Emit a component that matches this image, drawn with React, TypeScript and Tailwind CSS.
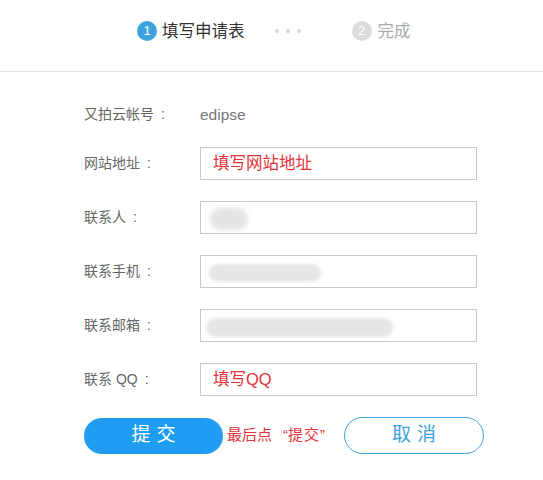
import React from "react";

const font = { fontFamily: '"Liberation Sans", "Noto Sans CJK SC", sans-serif' };

function Row({ label, children }: { label: string; children: React.ReactNode }) {
  return (
    <div className="flex items-center h-[33px]">
      <div className="w-[116px] text-[14px] text-[#666] flex items-center">
        <span>{label}</span>
        <span className="ml-[7px]">:</span>
      </div>
      {children}
    </div>
  );
}

function Box({ children }: { children?: React.ReactNode }) {
  return (
    <div className="relative w-[277px] h-[33px] border border-[#c8c8c8] flex items-center pl-[12px] overflow-hidden">
      {children}
    </div>
  );
}

export default function App() {
  return (
    <div className="w-[543px] h-[480px] bg-white" style={font}>
      <div className="h-[72px] border-b border-[#e3e3e3] flex justify-start pl-[137px] pt-[21px]">
        <div className="flex items-start h-[20px]">
          <div className="flex items-center">
            <div className="w-[20px] h-[20px] rounded-full bg-[#3ea2dd] text-white text-[13px] flex items-center justify-center">1</div>
            <div className="ml-[5px] text-[16.5px] text-[#333] leading-[20px]">填写申请表</div>
          </div>
          <div className="flex items-center gap-[7px] h-[20px] ml-[30px] mr-[51px]">
            <span className="w-[4px] h-[4px] rounded-full bg-[#d6d6d6]" />
            <span className="w-[4px] h-[4px] rounded-full bg-[#d6d6d6]" />
            <span className="w-[4px] h-[4px] rounded-full bg-[#d6d6d6]" />
          </div>
          <div className="flex items-center">
            <div className="w-[20px] h-[20px] rounded-full bg-[#dcdcdc] text-white text-[13px] flex items-center justify-center">2</div>
            <div className="ml-[6px] text-[16.5px] text-[#aaa] leading-[20px]">完成</div>
          </div>
        </div>
      </div>

      <div className="pl-[84px] pt-[26px] flex flex-col">
        <Row label="又拍云帐号">
          <div className="text-[15.5px] text-[#777]">edipse</div>
        </Row>
        <div className="mt-[16px] flex flex-col gap-[21px]">
          <Row label="网站地址">
            <Box>
              <span className="text-[16.5px] text-[#e2333b]">填写网站地址</span>
            </Box>
          </Row>
          <Row label="联系人">
            <Box>
              <div className="absolute left-[9px] top-[6px] w-[38px] h-[22px] rounded-full bg-[#e4e4e4] blur-[2px]" />
            </Box>
          </Row>
          <Row label="联系手机">
            <Box>
              <div className="absolute left-[8px] top-[8px] w-[112px] h-[18px] rounded-full bg-[#e6e6e6] blur-[1.5px]" />
            </Box>
          </Row>
          <Row label="联系邮箱">
            <Box>
              <div className="absolute left-[5px] top-[8px] w-[187px] h-[19px] rounded-full bg-[#e6e6e6] blur-[1.5px]" />
            </Box>
          </Row>
          <Row label="联系 QQ">
            <Box>
              <span className="text-[16.5px] text-[#e2333b]">填写QQ</span>
            </Box>
          </Row>
        </div>
        <div className="mt-[21px] flex items-center">
          <div className="w-[139px] h-[36px] rounded-full bg-[#1e9df2] text-white text-[19px] tracking-[6px] flex items-center justify-center pl-[6px]">提交</div>
          <div className="ml-[4px] w-[104px] text-[15px] text-[#e2333b] flex items-center">
            <span>最后点</span>
            <span className="ml-[11px]">“</span>
            <span className="tracking-[1px]">提交</span>
            <span>”</span>
          </div>
          <div className="ml-[13px] w-[140px] h-[37px] rounded-full border border-[#3ea2dd] text-[#3ea2dd] text-[19px] tracking-[6px] flex items-center justify-center pl-[6px]">取消</div>
        </div>
      </div>
    </div>
  );
}
